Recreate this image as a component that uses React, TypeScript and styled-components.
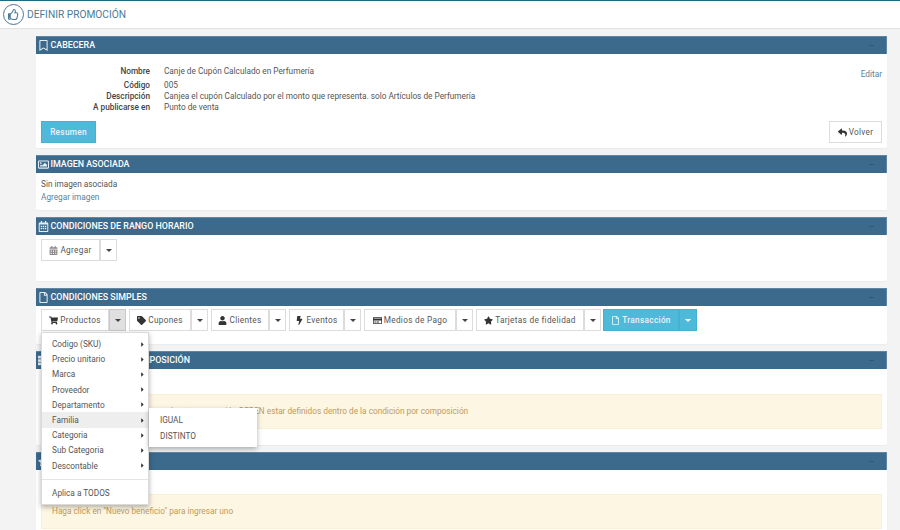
import React from "react";
import styled, { createGlobalStyle } from "styled-components";
import {
  FaBolt,
  FaCaretRight,
  FaRegBookmark,
  FaRegCalendarAlt,
  FaRegCreditCard,
  FaRegFile,
  FaRegImage,
  FaRegThumbsUp,
  FaReply,
  FaShoppingCart,
  FaStar,
  FaTag,
  FaUser,
  FaCalendarAlt,
  FaTh,
} from "react-icons/fa";

const GlobalStyle = createGlobalStyle`
  html, body {
    margin: 0;
    padding: 0;
    height: 530px;
    overflow: hidden;
    background: #f3f3f3;
    font-family: Roboto, "Liberation Sans", sans-serif;
    font-size: 8.25px;
    color: #555;
  }
`;

const Page = styled.div`
  width: 900px;
  height: 530px;
  overflow: hidden;
`;

const TopBar = styled.header`
  height: 29px;
  box-sizing: border-box;
  border-top: 1px solid #1f6a80;
  border-bottom: 1px solid #e2e2e2;
  background: #fff;
  display: flex;
  align-items: center;
  padding-left: 3px;
  gap: 3px;
  color: #4a7a98;
  font-size: 10.2px;
`;

const ThumbCircle = styled.span`
  width: 21px;
  height: 21px;
  box-sizing: border-box;
  border: 1px solid #4a7a98;
  border-radius: 50%;
  display: flex;
  align-items: center;
  justify-content: center;
  font-size: 11px;
`;

const Content = styled.main`
  width: 851px;
  margin: 7px 0 0 36px;
`;

const Panel = styled.section<{ $height: number }>`
  height: ${(p) => p.$height}px;
  background: #fff;
  border-radius: 2px;
  margin-bottom: 7px;
  box-shadow: 0 1px 1px #ececec;
`;

const PanelHead = styled.div`
  height: 18px;
  box-sizing: border-box;
  background: #3b6a8c;
  border: 1px solid #5f87a3;
  border-width: 1px 1px 0 0;
  color: #fff;
  display: flex;
  align-items: center;
  padding: 0 6px 1px 2px;
  gap: 1.5px;
  font-size: 8.9px;
  font-weight: 500;
  svg {
    font-size: 11px;
    color: #e6edf2;
  }
`;

const Collapse = styled.span`
  margin-left: auto;
  margin-right: 6px;
  width: 5px;
  height: 1px;
  background: #2f5873;
`;

const PanelBody = styled.div`
  padding: 0 5px;
`;

const InfoList = styled.div`
  padding-top: 9px;
`;

const InfoRow = styled.div<{ $height: number }>`
  display: flex;
  height: ${(p) => p.$height}px;
  align-items: center;
`;

const InfoLabel = styled.span`
  width: 109px;
  text-align: right;
  font-weight: 500;
  color: #444;
`;

const InfoValue = styled.span`
  margin-left: 14px;
`;

const EditLink = styled.a`
  margin: 5px 0 0 auto;
  color: #5b7f98;
`;

const ActionRow = styled.div`
  display: flex;
  justify-content: space-between;
  margin-top: 9px;
`;

const Btn = styled.button<{ $w: number; $info?: boolean; $open?: boolean }>`
  width: ${(p) => p.$w}px;
  height: 22px;
  box-sizing: border-box;
  padding: 0;
  font: inherit;
  font-weight: ${(p) => (p.$info ? 500 : 400)};
  letter-spacing: 0.3px;
  color: ${(p) => (p.$info ? "#e6f6fb" : "#555")};
  background: ${(p) => (p.$info ? "#4fb9da" : p.$open ? "#e0e0e0" : "#fff")};
  border: 1px solid ${(p) => (p.$info ? "#46b0d2" : p.$open ? "#c8c8c8" : "#dcdcdc")};
  display: inline-flex;
  align-items: center;
  justify-content: center;
  gap: 2px;
  svg {
    font-size: 9px;
    color: ${(p) => (p.$info ? "#e6f6fb" : "#333")};
  }
`;

const MutedIcon = styled.span`
  display: inline-flex;
  svg {
    color: #888;
  }
`;

const Caret = styled.span<{ $light?: boolean }>`
  width: 0;
  height: 0;
  border-left: 3px solid transparent;
  border-right: 3px solid transparent;
  border-top: 3px solid ${(p) => (p.$light ? "#fff" : "#444")};
`;

const Group = styled.div<{ $pull?: boolean }>`
  display: inline-flex;
  margin-left: ${(p) => (p.$pull ? "-1px" : "0")};
`;

const GroupRow = styled.div<{ $top: number }>`
  display: flex;
  gap: 3px;
  padding-top: ${(p) => p.$top}px;
  position: relative;
`;

const Line = styled.div`
  height: 13px;
  line-height: 13px;
  margin-top: 5px;
`;

const Link = styled.div`
  height: 13px;
  line-height: 13px;
  color: #5b7f98;
`;

const Spacer = styled.div<{ $h: number }>`
  height: ${(p) => p.$h}px;
`;

const Alert = styled.div`
  box-sizing: border-box;
  height: 35px;
  background: #fdf6e3;
  border: 1px solid #faefd2;
  color: #bd9a5f;
  padding: 0 0 1px 10px;
  display: flex;
  align-items: center;
`;

const Menu = styled.ul`
  position: absolute;
  margin: 0;
  list-style: none;
  left: 0;
  top: 26px;
  width: 108px;
  box-sizing: border-box;
  padding: 3.5px 0 4px;
  background: #fff;
  border: 1px solid #dadada;
  box-shadow: 0 2px 5px rgba(0, 0, 0, 0.3);
  z-index: 5;
`;

const MenuItem = styled.li<{ $active?: boolean }>`
  height: 15.2px;
  display: flex;
  align-items: center;
  padding: 0 2px 0 10px;
  background: ${(p) => (p.$active ? "#eeeeee" : "transparent")};
  position: relative;
  svg {
    margin-left: auto;
    font-size: 7px;
    color: #333;
  }
`;

const Divider = styled.li`
  height: 1px;
  background: #e4e4e4;
  margin: 6px 0 5px;
`;

const SubMenu = styled.ul`
  position: absolute;
  margin: 0;
  list-style: none;
  left: 107px;
  top: -4px;
  width: 108px;
  box-sizing: border-box;
  padding: 4px 0;
  background: #fff;
  box-shadow: 0 2px 5px rgba(0, 0, 0, 0.3);
`;

const SubItem = styled.li`
  height: 15.5px;
  display: flex;
  align-items: center;
  padding-left: 11px;
`;

const simples = [
  { label: "Productos", icon: <FaShoppingCart />, w: 68, open: true },
  { label: "Cupones", icon: <FaTag />, w: 62 },
  { label: "Clientes", icon: <FaUser />, w: 58 },
  { label: "Eventos", icon: <FaBolt />, w: 55 },
  { label: "Medios de Pago", icon: <FaRegCreditCard />, w: 92 },
  { label: "Tarjetas de fidelidad", icon: <FaStar />, w: 108 },
];

const menuItems = [
  "Codigo (SKU)",
  "Precio unitario",
  "Marca",
  "Proveedor",
  "Departamento",
  "Familia",
  "Categoria",
  "Sub Categoria",
  "Descontable",
];

export default function App() {
  return (
    <Page>
      <GlobalStyle />
      <TopBar>
        <ThumbCircle>
          <FaRegThumbsUp />
        </ThumbCircle>
        DEFINIR PROMOCIÓN
      </TopBar>
      <Content>
        <Panel $height={112}>
          <PanelHead>
            <FaRegBookmark />
            CABECERA
            <Collapse />
          </PanelHead>
          <PanelBody>
            <InfoList>
              <InfoRow $height={16}>
                <InfoLabel>Nombre</InfoLabel>
                <InfoValue>Canje de Cupón Calculado en Perfumería</InfoValue>
                <EditLink>Editar</EditLink>
              </InfoRow>
              <InfoRow $height={11}>
                <InfoLabel>Código</InfoLabel>
                <InfoValue>005</InfoValue>
              </InfoRow>
              <InfoRow $height={11}>
                <InfoLabel>Descripción</InfoLabel>
                <InfoValue>Canjea el cupón Calculado por el monto que representa. solo Artículos de Perfumería</InfoValue>
              </InfoRow>
              <InfoRow $height={11}>
                <InfoLabel>A publicarse en</InfoLabel>
                <InfoValue>Punto de venta</InfoValue>
              </InfoRow>
            </InfoList>
            <ActionRow>
              <Btn $w={55} $info>
                Resumen
              </Btn>
              <Btn $w={53}>
                <FaReply />
                Volver
              </Btn>
            </ActionRow>
          </PanelBody>
        </Panel>

        <Panel $height={55}>
          <PanelHead>
            <FaRegImage />
            IMAGEN ASOCIADA
            <Collapse />
          </PanelHead>
          <PanelBody>
            <Line>Sin imagen asociada</Line>
            <Link>Agregar imagen</Link>
          </PanelBody>
        </Panel>

        <Panel $height={64}>
          <PanelHead>
            <FaRegCalendarAlt />
            CONDICIONES DE RANGO HORARIO
            <Collapse />
          </PanelHead>
          <PanelBody>
            <GroupRow $top={4}>
              <Group>
                <Btn $w={59}>
                  <MutedIcon>
                    <FaCalendarAlt />
                  </MutedIcon>
                  Agregar
                </Btn>
                <Btn $w={17}>
                  <Caret />
                </Btn>
              </Group>
            </GroupRow>
          </PanelBody>
        </Panel>

        <Panel $height={56}>
          <PanelHead>
            <FaRegFile />
            CONDICIONES SIMPLES
            <Collapse />
          </PanelHead>
          <PanelBody>
            <GroupRow $top={3}>
              {simples.map((s) => (
                <Group key={s.label}>
                  <Btn $w={s.w}>
                    {s.icon}
                    {s.label}
                  </Btn>
                  <Btn $w={17} $open={s.open}>
                    <Caret />
                  </Btn>
                </Group>
              ))}
              <Group $pull>
                <Btn $w={76} $info>
                  <FaRegFile />
                  Transacción
                </Btn>
                <Btn $w={18} $info>
                  <Caret $light />
                </Btn>
              </Group>
              <Menu>
                {menuItems.map((item) => (
                  <MenuItem key={item} $active={item === "Familia"}>
                    {item}
                    <FaCaretRight />
                    {item === "Familia" && (
                      <SubMenu>
                        <SubItem>IGUAL</SubItem>
                        <SubItem>DISTINTO</SubItem>
                      </SubMenu>
                    )}
                  </MenuItem>
                ))}
                <Divider />
                <MenuItem>Aplica a TODOS</MenuItem>
              </Menu>
            </GroupRow>
          </PanelBody>
        </Panel>

        <Panel $height={94}>
          <PanelHead>
            <FaTh />
            CONDICIONES POR COMPOSICIÓN
            <Collapse />
          </PanelHead>
          <PanelBody>
            <Spacer $h={25} />
            <Alert>Los artículos y medios de pago de esta promoción DEBEN estar definidos dentro de la condición por composición</Alert>
          </PanelBody>
        </Panel>

        <Panel $height={90}>
          <PanelHead>
            <FaStar />
            BENEFICIOS
            <Collapse />
          </PanelHead>
          <PanelBody>
            <Spacer $h={24} />
            <Alert>Haga click en "Nuevo beneficio" para ingresar uno</Alert>
          </PanelBody>
        </Panel>
      </Content>
    </Page>
  );
}
